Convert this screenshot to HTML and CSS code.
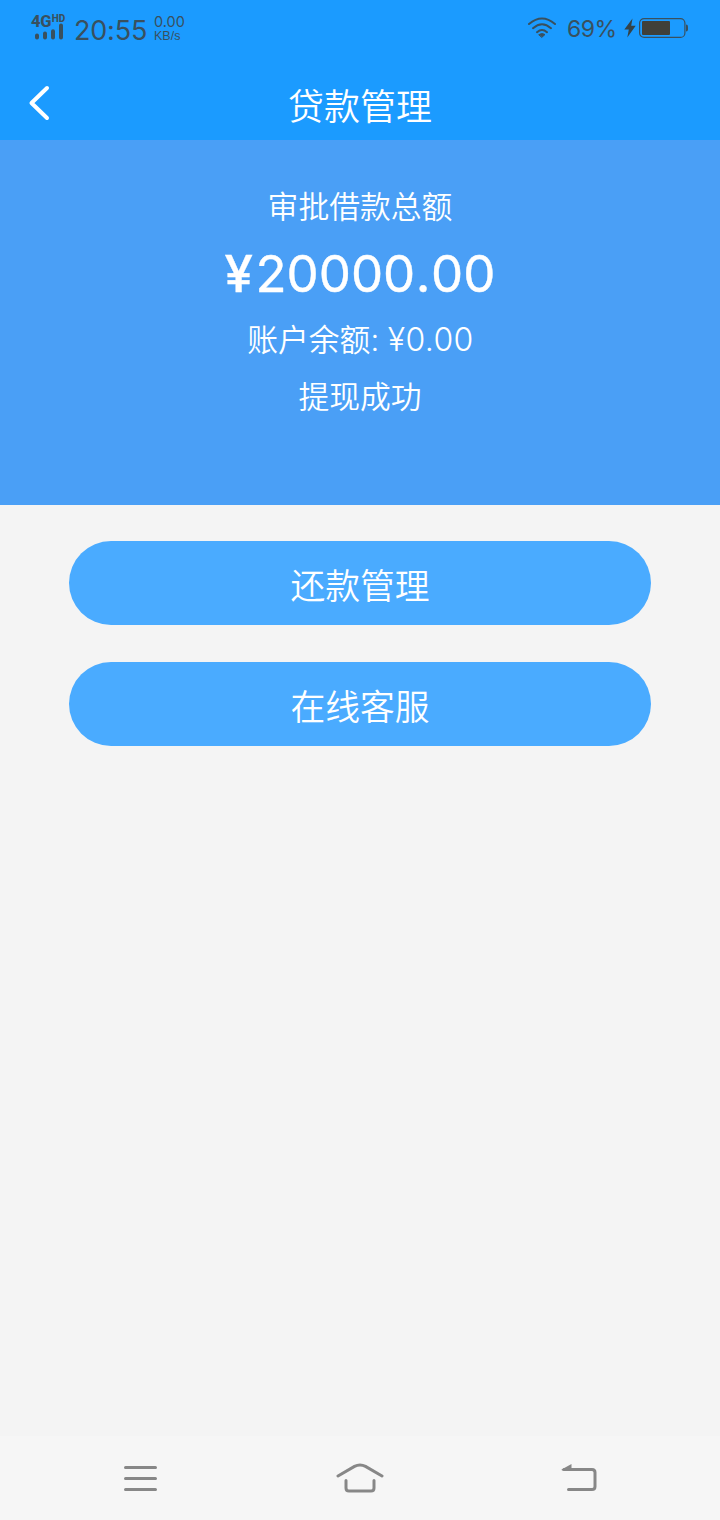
FILE: index.html
```html
<!DOCTYPE html>
<html lang="zh-CN">
<head>
<meta charset="utf-8">
<title>贷款管理</title>
<link rel="stylesheet" href="styles.css">
</head>
<body>
<div class="screen">
  <header class="top">
    <div class="status">
      <div class="signal">
        <div class="network">4G<span class="hd">HD</span></div>
        <svg class="bars" width="30" height="17" viewBox="0 0 30 17"><path d="M2 12.500v2M10 10.500v4M18 8.300v6.200M26 2.500v12" stroke="currentColor" stroke-width="4" stroke-linecap="round"/></svg>
      </div>
      <span class="clock">20:55</span>
      <div class="speed"><span class="rate">0.00</span><span class="unit">KB/s</span></div>
      <svg class="wifi" width="30" height="22" viewBox="0 0 30 22" fill="none" stroke="currentColor" stroke-width="2" stroke-linecap="round"><path d="M2 7Q15-4 28 7M6 11.2Q15 3.200 24 11.2M10 15.200Q15 10.800 20 15.200"/><path d="M12 17.500Q15 15.500 18 17.500L15 20.200Z" fill="currentColor" stroke-width="1"/></svg>
      <span class="percent">69%</span>
      <svg class="bolt" width="12" height="20" viewBox="0 0 12 20"><path d="M8.500 0.500L0.300 11.500H4.800L3.300 19.500L11.700 7.800H7.200Z" fill="currentColor"/></svg>
      <svg class="battery" width="50" height="20" viewBox="0 0 50 20"><rect x=".6" y=".6" width="45.300" height="18.800" rx="4.500" fill="none" stroke="currentColor" stroke-width="1.200"/><rect class="charge" x="3" y="3" width="28" height="14" rx="1"/><path d="M47 6.500q2 0 2 2v3q0 2-2 2z" fill="currentColor"/></svg>
    </div>
    <div class="titlebar">
      <svg class="back" width="24" height="38" viewBox="0 0 24 38"><path d="M19 4L3.500 19L19 34" fill="none" stroke="#fff" stroke-width="4" stroke-linecap="round" stroke-linejoin="round"/></svg>
      <h1 class="title">贷款管理</h1>
    </div>
  </header>
  <section class="summary">
    <p class="label">审批借款总额</p>
    <p class="amount"><span class="currency">¥</span>20000<span class="point">.</span>00</p>
    <p class="balance">账户余额: <span class="money">¥0.00</span></p>
    <p class="result">提现成功</p>
  </section>
  <main class="actions">
    <button class="action">还款管理</button>
    <button class="action">在线客服</button>
  </main>
  <nav class="nav">
    <svg width="34" height="28" viewBox="0 0 34 28"><path d="M1.500 3.500h30M1.500 14.500h30M1.500 25.500h30"/></svg>
    <svg class="home" width="48" height="30" viewBox="0 0 48 30"><path d="M2 13L18.500 3.400Q24 .5 29.500 3.400L46 13M10 17.500v7.500q0 3 3 3h22q3 0 3-3V17.500"/></svg>
    <svg width="36" height="28" viewBox="0 0 36 28"><path d="M3 5.500h28q3 0 3 3v14q0 3-3 3H7.500"/><path class="tip" d="M.5 5.500L10.500 0V6.500H1Z"/></svg>
  </nav>
</div>
</body>
</html>
```
FILE: styles.css
```css
* { box-sizing: border-box; }
body { margin: 0; }
h1, p { margin: 0; font-weight: 350; }
svg { display: block; flex: none; }

.screen {
  width: 720px;
  height: 1520px;
  display: flex;
  flex-direction: column;
  background: #f4f4f4;
  color: #fff;
  font-family: "Inter", "Noto Sans CJK SC", sans-serif;
}

.top { height: 140px; background: #1b9bff; }

.status {
  height: 68px;
  padding: 0 31px 0 31px;
  display: flex;
  align-items: flex-start;
  color: #39505e;
  white-space: nowrap;
}
.signal { width: 36px; margin-top: 14px; }
.network { height: 9px; font: 800 16.5px/15px Roboto, sans-serif; letter-spacing: -0.3px; display: flex; }
.hd { margin-left: 0.5px; font-size: 10px; line-height: 9px; letter-spacing: 0; }
.bars { margin-left: 4px; }
.clock { width: 72px; margin: 13px 0 0 7px; font-size: 27px; line-height: 35px; letter-spacing: -0.2px; }
.speed { margin: 15px 0 0 8px; display: flex; flex-direction: column; }
.rate { font-size: 14.5px; line-height: 14px; }
.unit { font: 12.5px/14px "Liberation Sans", sans-serif; }
.wifi { margin: 17px 0 0 auto; }
.percent { width: 49px; margin: 15px 0 0 10px; font-size: 23px; line-height: 28px; letter-spacing: -0.5px; }
.bolt { margin: 18px 0 0 8px; color: #354348; }
.battery { margin: 18px 0 0 3px; }
.charge { fill: #404039; }

.titlebar {
  height: 72px;
  padding: 0 28px;
  display: grid;
  grid-template-columns: 24px 1fr 24px;
}
.back { margin-top: 16px; }
.title { text-align: center; font-size: 36px; line-height: 78px; }

.summary {
  height: 365px;
  padding-top: 44px;
  text-align: center;
  background: #4a9ff6;
}
.label, .balance, .result { font-size: 30.8px; line-height: 46px; }
.amount {
  margin-top: 11px;
  font-size: 51px;
  line-height: 66px;
  font-weight: 400;
  -webkit-text-stroke: 0.4px #fff;
}
.currency { font-weight: 500; margin-right: 2.5px; }
.point { margin: 0 0.5px; }
.balance { margin-top: 10px; padding-left: 1px; }
.money { font-size: 32px; letter-spacing: 0.4px; }
.result { margin-top: 11px; }

.actions {
  flex: 1;
  padding: 36px 69px 0;
  display: flex;
  flex-direction: column;
  gap: 37px;
}
.action {
  height: 84px;
  padding: 2px 0 0;
  border: 0;
  border-radius: 42px;
  background: #4aabff;
  color: #fff;
  font: 350 34.8px/50px "Noto Sans CJK SC", sans-serif;
}

.nav {
  height: 84px;
  padding: 0 123px 0 124px;
  display: flex;
  align-items: center;
  justify-content: space-between;
  background: #f6f6f6;
}
.nav svg { fill: none; stroke: #878787; stroke-width: 3; stroke-linecap: round; }
.nav .home { margin-bottom: 1px; }
.nav .tip { fill: #878787; stroke: none; }
```
